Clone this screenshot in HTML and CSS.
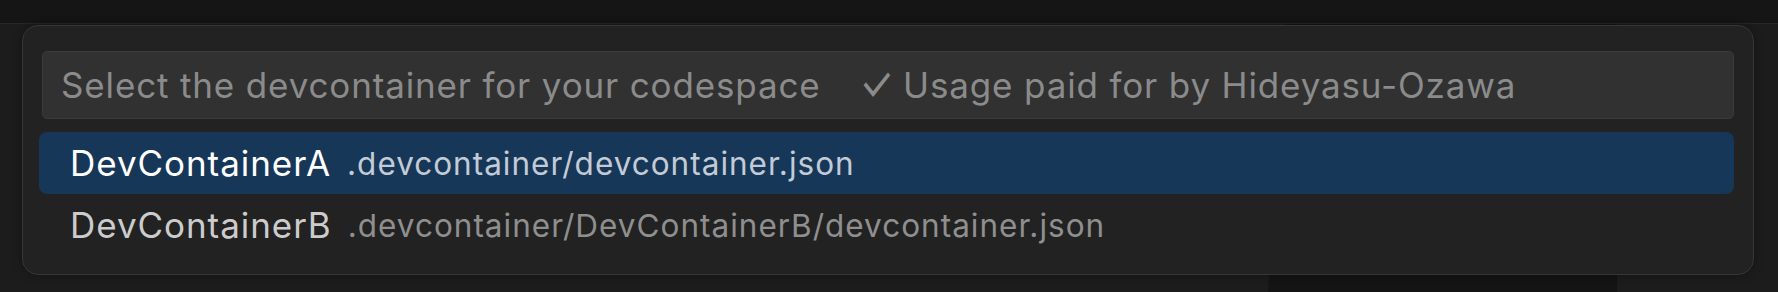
FILE: index.html
```html
<!DOCTYPE html>
<html lang="en">
<head>
    <meta charset="UTF-8">
    <meta name="viewport" content="width=device-width, initial-scale=1.0">
    <title>Select devcontainer</title>
    <link rel="stylesheet" href="styles.css">
</head>
<body>
    <div class="titlebar"></div>
    <div class="workbench">
        <div class="editor-shade"></div>

        <div class="quick-pick">
            <div class="quick-input">
                <span class="placeholder">Select the devcontainer for your codespace</span>
                <span class="placeholder note"><span class="check">✓</span> Usage paid for by Hideyasu-Ozawa</span>
            </div>
            <div class="list">
                <div class="item selected">
                    <span class="label">DevContainerA</span>
                    <span class="description">.devcontainer/devcontainer.json</span>
                </div>
                <div class="item">
                    <span class="label">DevContainerB</span>
                    <span class="description">.devcontainer/DevContainerB/devcontainer.json</span>
                </div>
            </div>
        </div>
    </div>
</body>
</html>
```

FILE: styles.css
```css
body {
    margin: 0;
    height: 292px;
    overflow: hidden;
    background-color: #1c1c1c;
    font-family: Inter, "Noto Sans", sans-serif;
}

.titlebar {
    height: 23px;
    background-color: #151515;
    border-bottom: 1px solid #272727;
}

.workbench {
    position: relative;
    height: 268px;
}

/* darker editor area peeking out below the picker */
.editor-shade {
    position: absolute;
    left: 1268px;
    top: 0;
    width: 349px;
    height: 100%;
    background-color: #141414;
    clip-path: polygon(18px 0, 100% 0, 100% 100%, 0 100%);
}

.quick-pick {
    position: absolute;
    left: 22px;
    top: 1px;
    width: 1732px;
    height: 250px;
    box-sizing: border-box;
    padding: 25px 19px 0 16px;
    background-color: #222222;
    border: 1px solid #363636;
    border-radius: 16px;
    box-shadow: 0 0 10px rgba(0, 0, 0, 0.35);
}

.quick-input {
    display: flex;
    align-items: center;
    height: 68px;
    box-sizing: border-box;
    margin-left: 3px;
    padding: 0 18px;
    background-color: #313131;
    border: 1px solid #3b3b3b;
    border-radius: 5px;
}

.placeholder {
    font-size: 35px;
    letter-spacing: 0.85px;
    color: #8b8b8b;
    white-space: nowrap;
}

.note {
    margin-left: 40px;
}

/* the tick is drawn taller in the original font */
.check {
    display: inline-block;
    transform: translateY(3px) scale(1.1, 1.4);
    transform-origin: 50% 80%;
}

.list {
    margin-top: 13px;
}

.item {
    display: flex;
    align-items: center;
    height: 62px;
    padding-left: 31px;
    border-radius: 8px;
    white-space: nowrap;
}

.item.selected {
    background-color: #163758;
}

.label {
    font-size: 35px;
    letter-spacing: 0.95px;
    color: #cccccc;
}

.description {
    font-size: 31.5px;
    letter-spacing: 1px;
    margin-left: 16px;
    color: #8f8f8f;
}

.item.selected .label {
    color: #ffffff;
}

.item.selected .description {
    color: #c3cbd6;
}
```
